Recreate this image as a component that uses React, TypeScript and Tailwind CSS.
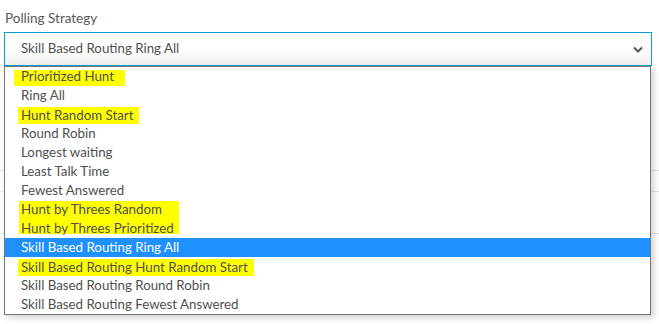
import React from "react";

const items = [
  "Prioritized Hunt",
  "Ring All",
  "Hunt Random Start",
  "Round Robin",
  "Longest waiting",
  "Least Talk Time",
  "Fewest Answered",
  "Hunt by Threes Random",
  "Hunt by Threes Prioritized",
  "Skill Based Routing Ring All",
  "Skill Based Routing Hunt Random Start",
  "Skill Based Routing Round Robin",
  "Skill Based Routing Fewest Answered",
];

function Item({ i, label }: { i: number; label: string }) {
  if (i === 9) {
    return (
      <div className="h-[19px] leading-[19px] pl-4 bg-[#1e90ff] text-white">{label}</div>
    );
  }
  if (i === 0) {
    return (
      <div className="h-[19px] pl-[9px] pt-[3px]">
        <span className="block h-[16px] leading-[13px] pl-[7px] w-[111px] bg-[#ffff00]">{label}</span>
      </div>
    );
  }
  if (i === 2 || i === 10) {
    return (
      <div className="h-[19px] pl-[13px] pt-[1px]">
        <span className="inline-block h-[17px] leading-[17px] pl-[3px] pr-[6px] bg-[#ffff00]">{label}</span>
      </div>
    );
  }
  if (i === 7) {
    return (
      <div className="h-[19px] pl-[14px] pt-[1px]">
        <span className="block h-[18px] leading-[17px] pl-[2px] w-[160px] bg-[#ffff00]">{label}</span>
      </div>
    );
  }
  if (i === 8) {
    return (
      <div className="h-[19px] pl-[14px]">
        <span className="block h-[15px] leading-[19px] pl-[2px] w-[160px] bg-[#ffff00]">{label}</span>
      </div>
    );
  }
  return <div className="h-[19px] leading-[19px] pl-4">{label}</div>;
}

export default function App() {
  return (
    <div
      className="relative w-[659px] h-[324px] bg-white overflow-hidden text-[#505050]"
      style={{ fontFamily: "Lato, 'Noto Sans', sans-serif" }}
    >
      <div className="pl-[5px] pt-[9px] text-[13.5px] leading-[18px] text-[#595959]">Polling Strategy</div>
      <div className="mt-[5px] ml-[4px] w-[648px] h-[34px] border border-[#0a9ad2] bg-gradient-to-b from-white via-white to-[#eeeeee] flex items-center pl-4 pr-[8px] text-[13.3px] text-[#505050]">
        <span className="flex-1">Skill Based Routing Ring All</span>
        <svg width="10" height="7" viewBox="0 0 10 7">
          <polyline points="1,1.5 5,5.5 9,1.5" fill="none" stroke="#555" strokeWidth="2" />
        </svg>
      </div>
      {/* underlying page content */}
      <div className="mt-[104px] h-px bg-[#e2e2e2]" />
      <div className="mt-[20px] h-px bg-[#e2e2e2]" />
      <div className="mt-[41px] h-px bg-[#e2e2e2]" />
      {/* dropdown */}
      <div className="absolute left-[4px] top-[66px] w-[647px] h-[249px] border border-[#767676] bg-white shadow-[3px_3px_6px_rgba(0,0,0,0.18)] text-[13.3px]">
        {items.map((l, i) => (
          <Item key={i} i={i} label={l} />
        ))}
      </div>
    </div>
  );
}
